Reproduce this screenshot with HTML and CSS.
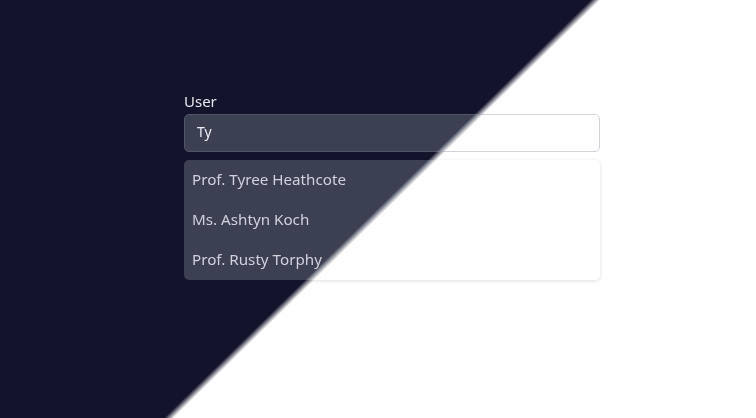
FILE: index.html
```html
<!DOCTYPE html>
<html>
<head>
<meta charset="utf-8">
<link rel="stylesheet" href="styles.css">
</head>
<body>
<div class="stage">
  <div class="theme light">
    <div class="field">
      <label class="label">User</label>
      <div class="input">Ty</div>
      <ul class="list">
        <li>Prof. Tyree Heathcote</li>
        <li>Ms. Ashtyn Koch</li>
        <li>Prof. Rusty Torphy</li>
      </ul>
    </div>
  </div>
  <div class="theme dark">
    <div class="field">
      <label class="label">User</label>
      <div class="input">Ty</div>
      <ul class="list">
        <li>Prof. Tyree Heathcote</li>
        <li>Ms. Ashtyn Koch</li>
        <li>Prof. Rusty Torphy</li>
      </ul>
    </div>
  </div>
</div>
</body>
</html>
```
FILE: styles.css
```css
html, body {
  margin: 0;
  padding: 0;
}
body {
  font-family: "Noto Sans", "Open Sans", sans-serif;
}
.stage {
  position: relative;
  width: 756px;
  height: 418px;
  overflow: hidden;
}
.theme {
  position: absolute;
  inset: 0;
  padding: 92px 0 0 184px;
  box-sizing: border-box;
}
.field {
  width: 416px;
  display: flex;
  flex-direction: column;
}
.label {
  font-size: 15px;
  line-height: 18px;
  margin-bottom: 4px;
}
.input {
  height: 38px;
  box-sizing: border-box;
  border-radius: 5px;
  padding: 0 12px 3px 12px;
  display: flex;
  align-items: center;
  font-size: 14px;
}
.list {
  list-style: none;
  margin: 8px 0 0 0;
  padding: 0;
  border-radius: 5px;
}
.list li {
  height: 40px;
  box-sizing: border-box;
  padding: 0 8px 2px 8px;
  display: flex;
  align-items: center;
  font-size: 15.2px;
}
.light {
  background: #ffffff;
  color: #1f2937;
}
.light .input {
  background: #ffffff;
  border: 1px solid #d2d2da;
}
.light .list {
  background: #ffffff;
  box-shadow: 0 1px 4px rgba(0, 0, 0, 0.12);
}
.dark {
  background: #13132c;
  color: #e6e7ec;
  -webkit-mask-image: linear-gradient(135.6deg, #000 49.95%, transparent 50.75%);
  mask-image: linear-gradient(135.6deg, #000 49.95%, transparent 50.75%);
}
.dark .input {
  background: #3b4053;
  border: 1px solid #50556a;
  color: #eceef2;
}
.dark .list {
  background: #3b4053;
  color: #cfd2dc;
}
```
